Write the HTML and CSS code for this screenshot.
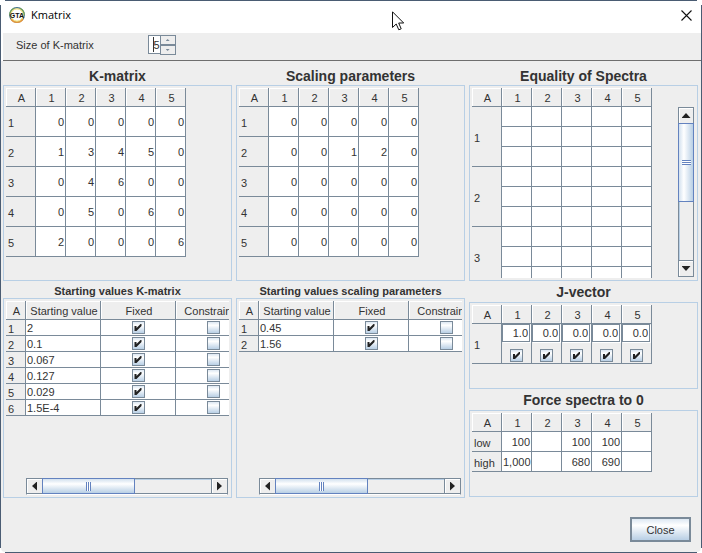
FILE: index.html
```
<!DOCTYPE html>
<html lang="en">
<head>
<meta charset="utf-8">
<title>Kmatrix</title>
<link rel="stylesheet" href="styles.css">
</head>
<body>
<div class="window">
  <header class="titlebar">
    <svg class="logo" width="16" height="16" viewBox="0 0 16 16" aria-hidden="true">
      <circle cx="8" cy="8" r="7.3" fill="#fff" stroke="#3f6f86" stroke-width="1.2"/>
      <path d="M.8 8A7.200 7.200 0 0 1 5 1.400M11 1.400A7.200 7.200 0 0 1 15.200 8" fill="none" stroke="#6fa05a" stroke-width="1.2"/>
      <path d="M2 12A7.200 7.200 0 0 0 14 12" fill="none" stroke="#e8963a" stroke-width="1.4"/>
      <circle cx="8" cy="8" r="6.2" fill="none" stroke="#f0d860" stroke-width="1"/>
      <text x="8" y="10.5" text-anchor="middle" class="logo-text">GTA</text>
    </svg>
    <h1 class="title">Kmatrix</h1>
    <button class="window-close" type="button" aria-label="Close window">
      <svg width="11" height="11" viewBox="0 0 11 11"><path d="M.5 .5L10.500 10.500M10.500 .5L.5 10.500" stroke="#111" stroke-width="1.1"/></svg>
    </button>
  </header>

  <div class="toolbar">
    <label for="size">Size of K-matrix</label>
    <div class="spinner">
      <input id="size" type="text" inputmode="numeric" value="5">
      <div class="steps">
        <button type="button" aria-label="Increase"><span class="tri up"></span></button>
        <button type="button" aria-label="Decrease"><span class="tri down"></span></button>
      </div>
    </div>
  </div>

  <main class="columns">
    <div class="column">
      <h2 class="tall">K-matrix</h2>
      <section class="panel upper">
        <table class="grid matrix">
          <thead><tr><th>A</th><th>1</th><th>2</th><th>3</th><th>4</th><th>5</th></tr></thead>
          <tbody>
            <tr><th>1</th><td>0</td><td>0</td><td>0</td><td>0</td><td>0</td></tr>
            <tr><th>2</th><td>1</td><td>3</td><td>4</td><td>5</td><td>0</td></tr>
            <tr><th>3</th><td>0</td><td>4</td><td>6</td><td>0</td><td>0</td></tr>
            <tr><th>4</th><td>0</td><td>5</td><td>0</td><td>6</td><td>0</td></tr>
            <tr><th>5</th><td>2</td><td>0</td><td>0</td><td>0</td><td>6</td></tr>
          </tbody>
        </table>
      </section>
      <h3>Starting values K-matrix</h3>
      <section class="panel lower">
        <div class="clip">
          <table class="grid values">
            <thead><tr><th>A</th><th>Starting value</th><th>Fixed</th><th>Constrained</th></tr></thead>
            <tbody>
              <tr><th>1</th><td>2</td><td><input type="checkbox" aria-label="Fixed 1" checked></td><td><input type="checkbox" aria-label="Constrained 1"></td></tr>
              <tr><th>2</th><td>0.1</td><td><input type="checkbox" aria-label="Fixed 2" checked></td><td><input type="checkbox" aria-label="Constrained 2"></td></tr>
              <tr><th>3</th><td>0.067</td><td><input type="checkbox" aria-label="Fixed 3" checked></td><td><input type="checkbox" aria-label="Constrained 3"></td></tr>
              <tr><th>4</th><td>0.127</td><td><input type="checkbox" aria-label="Fixed 4" checked></td><td><input type="checkbox" aria-label="Constrained 4"></td></tr>
              <tr><th>5</th><td>0.029</td><td><input type="checkbox" aria-label="Fixed 5" checked></td><td><input type="checkbox" aria-label="Constrained 5"></td></tr>
              <tr><th>6</th><td>1.5E-4</td><td><input type="checkbox" aria-label="Fixed 6" checked></td><td><input type="checkbox" aria-label="Constrained 6"></td></tr>
            </tbody>
          </table>
        </div>
        <div class="scroll horizontal">
          <button type="button" aria-label="Scroll left"><span class="tri big left"></span></button>
          <div class="track"><div class="thumb"><span class="grip"></span></div></div>
          <button type="button" aria-label="Scroll right"><span class="tri big right"></span></button>
        </div>
      </section>
    </div>

    <div class="column">
      <h2 class="tall">Scaling parameters</h2>
      <section class="panel upper">
        <table class="grid matrix">
          <thead><tr><th>A</th><th>1</th><th>2</th><th>3</th><th>4</th><th>5</th></tr></thead>
          <tbody>
            <tr><th>1</th><td>0</td><td>0</td><td>0</td><td>0</td><td>0</td></tr>
            <tr><th>2</th><td>0</td><td>0</td><td>1</td><td>2</td><td>0</td></tr>
            <tr><th>3</th><td>0</td><td>0</td><td>0</td><td>0</td><td>0</td></tr>
            <tr><th>4</th><td>0</td><td>0</td><td>0</td><td>0</td><td>0</td></tr>
            <tr><th>5</th><td>0</td><td>0</td><td>0</td><td>0</td><td>0</td></tr>
          </tbody>
        </table>
      </section>
      <h3>Starting values scaling parameters</h3>
      <section class="panel lower">
        <div class="clip">
          <table class="grid values">
            <thead><tr><th>A</th><th>Starting value</th><th>Fixed</th><th>Constrained</th></tr></thead>
            <tbody>
              <tr><th>1</th><td>0.45</td><td><input type="checkbox" aria-label="Scaling fixed 1" checked></td><td><input type="checkbox" aria-label="Scaling constrained 1"></td></tr>
              <tr><th>2</th><td>1.56</td><td><input type="checkbox" aria-label="Scaling fixed 2" checked></td><td><input type="checkbox" aria-label="Scaling constrained 2"></td></tr>
            </tbody>
          </table>
        </div>
        <div class="scroll horizontal">
          <button type="button" aria-label="Scroll left"><span class="tri big left"></span></button>
          <div class="track"><div class="thumb"><span class="grip"></span></div></div>
          <button type="button" aria-label="Scroll right"><span class="tri big right"></span></button>
        </div>
      </section>
    </div>

    <div class="column">
      <h2 class="tall">Equality of Spectra</h2>
      <section class="panel upper split">
        <div class="clip">
          <table class="grid spectra">
            <thead><tr><th>A</th><th>1</th><th>2</th><th>3</th><th>4</th><th>5</th></tr></thead>
            <tbody>
              <tr><th rowspan="3">1</th><td></td><td></td><td></td><td></td><td></td></tr>
              <tr><td></td><td></td><td></td><td></td><td></td></tr>
              <tr><td></td><td></td><td></td><td></td><td></td></tr>
              <tr><th rowspan="3">2</th><td></td><td></td><td></td><td></td><td></td></tr>
              <tr><td></td><td></td><td></td><td></td><td></td></tr>
              <tr><td></td><td></td><td></td><td></td><td></td></tr>
              <tr><th rowspan="3">3</th><td></td><td></td><td></td><td></td><td></td></tr>
              <tr><td></td><td></td><td></td><td></td><td></td></tr>
              <tr><td></td><td></td><td></td><td></td><td></td></tr>
            </tbody>
          </table>
        </div>
        <div class="scroll vertical">
          <button type="button" aria-label="Scroll up"><span class="tri big up"></span></button>
          <div class="track"><div class="thumb"><span class="grip"></span></div></div>
          <button type="button" aria-label="Scroll down"><span class="tri big down"></span></button>
        </div>
      </section>
      <h2>J-vector</h2>
      <section class="panel small">
        <table class="grid jvector">
          <thead><tr><th>A</th><th>1</th><th>2</th><th>3</th><th>4</th><th>5</th></tr></thead>
          <tbody>
            <tr><th>1</th>
              <td><input type="text" aria-label="J 1" value="1.0"><input type="checkbox" aria-label="J 1 fixed" checked></td>
              <td><input type="text" aria-label="J 2" value="0.0"><input type="checkbox" aria-label="J 2 fixed" checked></td>
              <td><input type="text" aria-label="J 3" value="0.0"><input type="checkbox" aria-label="J 3 fixed" checked></td>
              <td><input type="text" aria-label="J 4" value="0.0"><input type="checkbox" aria-label="J 4 fixed" checked></td>
              <td><input type="text" aria-label="J 5" value="0.0"><input type="checkbox" aria-label="J 5 fixed" checked></td>
            </tr>
          </tbody>
        </table>
      </section>
      <h2>Force spectra to 0</h2>
      <section class="panel small">
        <table class="grid force">
          <thead><tr><th>A</th><th>1</th><th>2</th><th>3</th><th>4</th><th>5</th></tr></thead>
          <tbody>
            <tr><th>low</th><td>100</td><td></td><td>100</td><td>100</td><td></td></tr>
            <tr><th>high</th><td>1,000</td><td></td><td>680</td><td>690</td><td></td></tr>
          </tbody>
        </table>
      </section>
    </div>
  </main>

  <footer class="footer">
    <button class="close" type="button">Close</button>
  </footer>
</div>
<svg class="pointer" width="13" height="20" viewBox="0 0 13 20" aria-hidden="true">
  <path d="M.5 .8V16.500L4.200 13L6.800 18.800L9.200 17.800L6.700 12H11.700Z" fill="#fff" stroke="#111" stroke-width="1"/>
</svg>
</body>
</html>
```
FILE: styles.css
```
:root {
  --line: #7a8a99;
  --face: #eeeeee;
  --edge: #b8cfe5;
  --frame: #4a5c73;
  --accent: #6382bf;
  --text: #333333;
}

* { box-sizing: border-box; }

body {
  margin: 0;
  color: var(--text);
  font: 11px/14px "Liberation Sans", Arial, sans-serif;
}

button, input { font: inherit; color: inherit; margin: 0; padding: 0; border-radius: 0; }

.window {
  display: flex;
  flex-direction: column;
  min-height: 100vh;
  padding: 1px;
  background:
    linear-gradient(var(--frame), var(--frame)) 5px 0 / calc(100% - 10px) 1px no-repeat,
    linear-gradient(var(--frame), var(--frame)) 5px 100% / calc(100% - 10px) 1px no-repeat,
    linear-gradient(var(--frame), var(--frame)) 0 5px / 1px calc(100% - 10px) no-repeat,
    linear-gradient(var(--frame), var(--frame)) 100% 5px / 1px calc(100% - 10px) no-repeat,
    #fff;
}

.titlebar {
  display: flex;
  align-items: center;
  height: 32px;
  padding: 0 9px 4px 8px;
  background: #fff;
}

.logo-text { font: bold 7px "Liberation Sans", Arial, sans-serif; fill: #111; }

.title {
  margin: 0 auto 0 6px;
  color: #000;
  font: 11px/16px "Open Sans", sans-serif;
}

.window-close { display: flex; border: 0; background: none; }

.toolbar {
  display: flex;
  align-items: flex-start;
  gap: 54px;
  height: 28px;
  margin-left: 2px;
  padding: 2px 13px 0;
  border-bottom: 1px solid #6e6e6e;
  background: var(--face);
}

.toolbar label { line-height: 20px; }

.spinner { display: flex; height: 20px; }

.spinner input {
  width: 12px;
  height: 19px;
  border: 1px solid var(--line);
  border-right: 0;
  background: linear-gradient(#333, #333) 4px 1px / 1px 15px no-repeat #fff;
  text-align: right;
}

.steps { display: flex; flex-direction: column; }

.steps button {
  display: flex;
  align-items: center;
  justify-content: center;
  width: 16px;
  height: 10px;
  border: 1px solid var(--line);
  background: var(--face);
}

.tri { background: var(--line); }
.tri.up { width: 4px; height: 2px; clip-path: polygon(50% 0, 100% 100%, 0 100%); }
.tri.down { width: 4px; height: 2px; clip-path: polygon(0 0, 100% 0, 50% 100%); }
.tri.big { background: #222; }
.tri.big.up, .tri.big.down { width: 9px; height: 5px; }
.tri.left { width: 5px; height: 9px; clip-path: polygon(0 50%, 100% 0, 100% 100%); }
.tri.right { width: 5px; height: 9px; clip-path: polygon(0 0, 100% 50%, 0 100%); }

.columns {
  display: grid;
  flex: 1;
  grid-template-columns: repeat(3, minmax(0, 1fr));
  gap: 4px;
  padding: 0 3px 0 2px;
  background: var(--face);
}

.column { display: flex; flex-direction: column; }

h2, h3 { margin: 0; font-weight: bold; text-align: center; }
h2 { height: 21px; font-size: 14px; line-height: 22px; }
h2.tall { height: 24px; line-height: 30px; }
h3 { height: 17px; font-size: 11px; line-height: 20px; }

.panel { padding: 2px; border: 1px solid var(--edge); overflow: hidden; }
.upper { height: 196px; }
.lower { display: flex; flex: 1; flex-direction: column; justify-content: space-between; }
.small { height: 87px; }
.split { display: flex; justify-content: space-between; }
.clip { overflow: hidden; }

.grid { border-spacing: 0; table-layout: fixed; width: 180px; }

.grid th, .grid td {
  height: 20px;
  padding: 0 1px;
  border-right: 1px solid var(--line);
  border-bottom: 1px solid var(--line);
  font-weight: normal;
  line-height: 12px;
  white-space: nowrap;
}

.grid td { background: #fff; text-align: right; }
.grid tbody th { padding: 2px 0 0 2px; text-align: left; }

.grid thead th {
  height: 19px;
  padding: 2px 0 0 2px;
  box-shadow: inset 1px 1px #fff;
  text-align: center;
}

.matrix tbody th, .matrix td { height: 30px; }

.values { width: 245px; }
.values th:first-child { width: 20px; }
.values tbody th, .values td { height: 16px; }
.values td:nth-child(2) { text-align: left; }
.values td:nth-child(n+3) { text-align: center; }

.jvector tbody th, .jvector td { height: 40px; }
.jvector td { padding: 0; background: var(--face); vertical-align: top; text-align: center; }
.jvector input[type="text"] {
  display: block;
  width: 28px;
  height: 18px;
  padding-right: 1px;
  border: 1px solid var(--line);
  background: #fff;
  box-shadow: 1px 1px #fff;
  text-align: right;
}
.jvector input[type="checkbox"] { margin: 7px auto 0; }

input[type="checkbox"] {
  appearance: none;
  display: block;
  width: 13px;
  height: 13px;
  margin: 0 auto;
  border: 1px solid var(--line);
  background: linear-gradient(#dde8f3, #fff 30%, #b8cfe5);
}

input[type="checkbox"]:checked::before {
  content: "";
  display: block;
  width: 11px;
  height: 11px;
  background: #222;
  clip-path: polygon(2px 4px, 4px 4px, 4px 6px, 8px 2px, 9px 2px, 9px 4px, 4px 9px, 2px 9px);
}

.scroll { display: flex; border: 1px solid var(--line); }

.scroll button {
  display: flex;
  flex: none;
  align-items: center;
  justify-content: center;
  width: 15px;
  height: 15px;
  border: 0;
  background: var(--face);
  box-shadow: inset 1px 1px #fff;
}

.track { display: flex; flex: 1; }

.thumb {
  display: flex;
  flex: none;
  align-items: center;
  justify-content: center;
  border: 1px solid var(--accent);
}

.horizontal { height: 17px; margin: 0 1px 0 20px; border-bottom-color: #fff; }
.horizontal .track { border-right: 1px solid var(--line); border-bottom: 1px solid var(--line); box-shadow: inset 0 1px var(--edge); }
.horizontal button { border-bottom: 1px solid var(--line); }
.horizontal .thumb { width: 55%; margin: -1px 0; background: linear-gradient(#d3e1ef, #fff 35%, #b8cfe5); }
.horizontal .grip { width: 5px; height: 9px; background: repeating-linear-gradient(90deg, var(--accent) 0 1px, #fff 1px 2px); }

.vertical { flex-direction: column; width: 16px; margin: 19px 1px 1px 0; }
.vertical .track { flex-direction: column; border-bottom: 1px solid var(--line); box-shadow: inset 1px 0 var(--edge); }
.vertical .thumb { height: 58%; margin: 0 -1px; background: linear-gradient(90deg, #d3e1ef, #fff 35%, #b8cfe5); }
.vertical .grip { width: 9px; height: 5px; background: repeating-linear-gradient(var(--accent) 0 1px, #fff 1px 2px); }
.vertical button { width: 14px; }

.footer {
  display: flex;
  justify-content: flex-end;
  height: 54px;
  padding: 19px 10px 0;
  background: var(--face);
  border-radius: 0 0 4px 4px;
}

.close {
  width: 61px;
  height: 25px;
  border: 2px solid var(--line);
  background: linear-gradient(#dde8f3, #fff 30%, #b8cfe5);
}

.pointer { position: absolute; left: 392px; top: 11px; }
```
